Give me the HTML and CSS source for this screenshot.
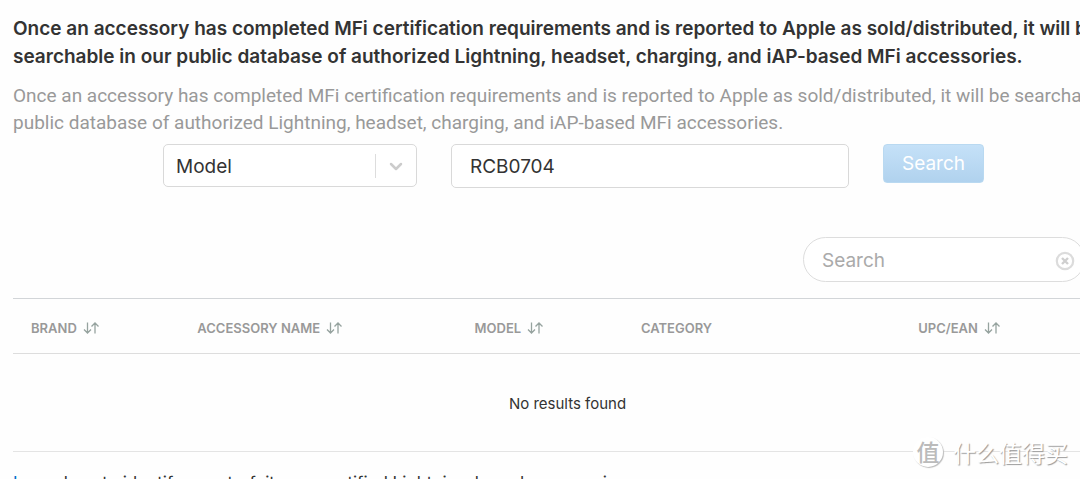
FILE: index.html
```html
<!DOCTYPE html>
<html lang="en">
<head>
<meta charset="utf-8">
<title>MFi Accessory Search</title>
<link rel="stylesheet" href="styles.css">
</head>
<body>
<svg class="defs" width="0" height="0" aria-hidden="true">
  <symbol id="sort" viewBox="0 0 16 12"><path d="M4.500 .5v10.500M1 7.500l3.500 3.500 3.500-3.500M12 11.500V1M8.500 4.500L12 1l3.500 3.500" fill="none" stroke="currentColor" stroke-width="1.300"/></symbol>
</svg>
<main class="page">
  <h1 class="title">Once an accessory has completed MFi certification requirements and is reported to Apple as sold/distributed, it will be<br>searchable in our public database of authorized Lightning, headset, charging, and iAP-based MFi accessories.</h1>
  <p class="intro">Once an accessory has completed MFi certification requirements and is reported to Apple as sold/distributed, it will be searchable in our<br>public database of authorized Lightning, headset, charging, and iAP-based MFi accessories.</p>
  <form class="lookup">
    <div class="picker">
      <select class="picker-select" aria-label="Search by"><option>Model</option></select>
      <svg class="picker-arrow" viewBox="0 0 24 24" aria-hidden="true"><path d="M6.500 10l5 5 5-5" fill="none" stroke="#ccc" stroke-width="2.500" stroke-linecap="round" stroke-linejoin="round"/></svg>
    </div>
    <input class="term" type="text" value="RCB0704" aria-label="Search term">
    <button class="submit" type="button">Search</button>
  </form>
  <div class="filter">
    <input class="filter-input" type="text" placeholder="Search" aria-label="Filter results">
    <button class="clear" type="button" aria-label="Clear"><svg viewBox="0 0 20 20" width="20" height="20"><circle cx="10" cy="10" r="8.200" fill="none" stroke="#dcdcdc" stroke-width="2.200"/><path d="M7 7l6 6M13 7l-6 6" stroke="#cfcfcf" stroke-width="2.400"/></svg></button>
  </div>
  <table class="results">
    <thead>
      <tr>
        <th class="narrow">BRAND <svg class="sort"><use href="#sort"/></svg></th>
        <th class="wide">ACCESSORY NAME <svg class="sort"><use href="#sort"/></svg></th>
        <th class="narrow">MODEL <svg class="sort"><use href="#sort"/></svg></th>
        <th class="wide">CATEGORY</th>
        <th>UPC/EAN <svg class="sort"><use href="#sort"/></svg></th>
      </tr>
    </thead>
    <tbody><tr><td class="empty" colspan="5">No results found</td></tr></tbody>
  </table>
  <p class="help"><a class="link" href="#">Learn</a> how to identify counterfeit or uncertified Lightning-based accessories.</p>
</main>
<div class="watermark"><span class="seal">值</span><span>什么值得买</span></div>
</body>
</html>
```
FILE: styles.css
```css
* { box-sizing: border-box; }
html { height: 100%; overflow: hidden; }
body {
  position: relative;
  height: 100%;
  margin: 0;
  overflow: hidden;
  background: #fefefe;
  color: #333;
  font-family: Inter, "Liberation Sans", sans-serif;
}
.defs { position: absolute; }
.page { margin-right: -42px; padding: 15px 0 0 13px; }
.title {
  margin: 0;
  font-size: 19px;
  font-weight: 640;
  line-height: 28px;
  white-space: nowrap;
}
.intro {
  margin: 11px 0 0;
  color: #999;
  font-family: Roboto, "Liberation Sans", sans-serif;
  font-size: 19px;
  line-height: 27px;
  white-space: nowrap;
}
.lookup {
  display: flex;
  align-items: flex-start;
  gap: 34px;
  margin: 8px 0 0 150px;
}
.picker {
  position: relative;
  width: 254px;
}
.picker-select, .term {
  width: 100%;
  height: 43px;
  border: 1px solid #d9d9d9;
  border-radius: 5px;
  background: #fff;
  color: #333;
  font: 19px Inter, "Liberation Sans", sans-serif;
}
.picker-select { padding: 2px 12px 0; appearance: none; }
.picker-arrow {
  position: absolute;
  top: 10px;
  right: 0;
  width: 42px;
  height: 24px;
  border-left: 1px solid #ddd;
  pointer-events: none;
}
.term { width: 398px; height: 44px; padding: 0 18px; }
.submit {
  width: 101px;
  height: 39px;
  padding: 0;
  border: 1px solid #b9d9f1;
  border-radius: 4px;
  background: linear-gradient(#c5e1f8, #b0d2ee);
  color: #fff;
  font: 19px Inter, "Liberation Sans", sans-serif;
}
.filter {
  position: relative;
  width: 282px;
  margin: 49px 37px 0 auto;
}
.filter-input {
  display: block;
  width: 100%;
  height: 45px;
  padding: 2px 50px 0 18px;
  border: 1px solid #ddd;
  border-radius: 23px;
  background: #fff;
  font: 19px Inter, "Liberation Sans", sans-serif;
}
.filter-input::placeholder { color: #aaa; }
.clear {
  position: absolute;
  top: 14px;
  right: 10px;
  width: 20px;
  height: 20px;
  padding: 0;
  border: 0;
  background: none;
}
.clear svg { display: block; }
.results {
  width: 100%;
  margin-top: 16px;
  border-collapse: collapse;
  table-layout: fixed;
}
th {
  height: 55px;
  padding: 4px 0 0 18px;
  border-top: 1px solid #d2d5d8;
  border-bottom: 1px solid #ddd;
  color: #999;
  font-size: 13px;
  font-weight: 600;
  text-align: left;
  white-space: nowrap;
}
.narrow { width: 15%; }
.wide { width: 25%; }
.sort {
  width: 16px;
  height: 12px;
  margin-left: 3px;
  color: #96a39f;
  vertical-align: -1px;
}
.empty {
  height: 98px;
  padding: 2px 0 0;
  border-bottom: 1px solid #e4e4e4;
  font-size: 15px;
  text-align: center;
}
.help {
  margin: 18px 0 0;
  font-size: 17px;
  line-height: 26px;
  white-space: nowrap;
}
.link { color: #0070c9; text-decoration: none; }
.watermark {
  position: absolute;
  right: 12px;
  bottom: 11px;
  display: flex;
  align-items: center;
  gap: 10px;
  color: #fff;
  font: 23px/32px "Noto Sans CJK SC", sans-serif;
  text-shadow: 1px 1px 1px #999;
}
.seal {
  width: 30px;
  height: 30px;
  border-radius: 50%;
  background: #fff;
  box-shadow: 1px 1px 1px #bbb;
  color: #bbb;
  font-weight: 500;
  line-height: 29px;
  text-align: center;
  text-shadow: none;
}
```
